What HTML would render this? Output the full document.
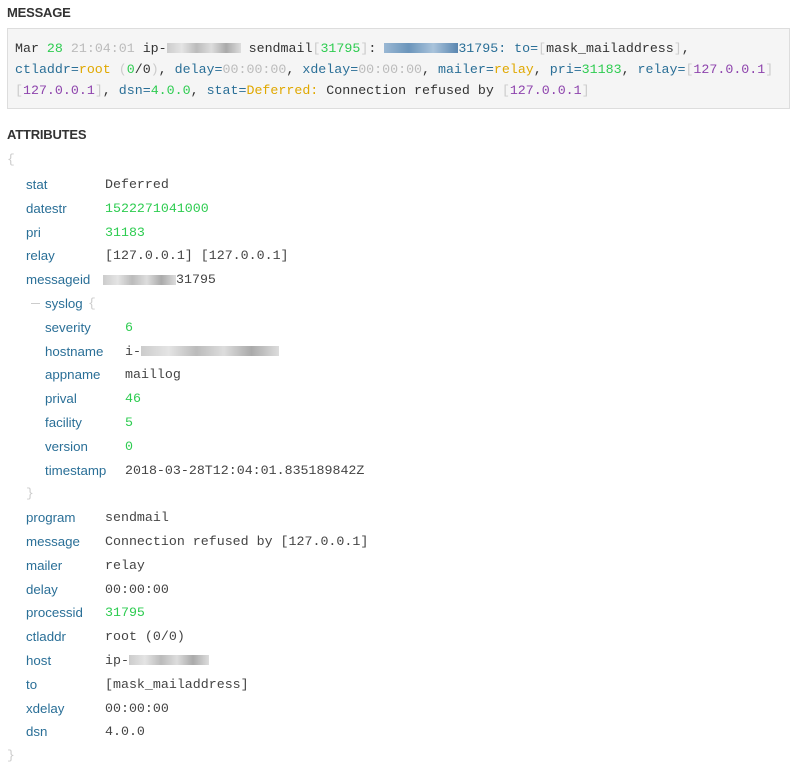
<!DOCTYPE html>
<html><head><meta charset="utf-8"><style>
body{margin:0;background:#fff;width:800px;height:767px;overflow:hidden;position:relative;font-family:"Liberation Sans",sans-serif}
h3{position:absolute;left:7px;margin:0;font-size:13px;font-weight:bold;color:#333;letter-spacing:-0.2px}
.box{position:absolute;left:7px;top:28px;width:783px;height:81px;background:#f5f5f5;border:1px solid #ddd;box-sizing:border-box}
.m{position:absolute;left:15px;font-family:"Liberation Mono",monospace;font-size:13.3px;color:#333;white-space:pre;line-height:21px}
.k{color:#2a6f97}.g{color:#2ecc51}.y{color:#e0a800}.p{color:#8e44ad}.l{color:#bbb}.b{color:#ccc}
.blur{display:inline-block;height:10px;background:linear-gradient(90deg,#ccc,#e4e4e4,#bbb,#ddd,#aaa,#ddd);vertical-align:middle}
.blu{display:inline-block;height:10px;background:linear-gradient(90deg,#9ab8d4,#6b95bb,#a9c3db,#5a86b0);vertical-align:middle}
.rows{position:absolute;left:0;top:173px;width:800px}
.r{height:23.8px;line-height:23.8px;position:relative;font-size:13.3px;white-space:pre}
.r .kk{position:absolute;color:#2a6f97;font-family:"Liberation Sans",sans-serif}
.r .v{position:absolute;font-family:"Liberation Mono",monospace;color:#444}
.r .v.g{color:#2ecc51}
.br{position:absolute;color:#ccc;font-family:"Liberation Mono",monospace;font-size:13px}
</style></head><body>
<h3 style="top:5px">MESSAGE</h3>
<div class="box"></div>
<div class="m" style="top:38px">Mar <span class="g">28</span> <span class="l">21:04:01</span> ip-<span class="blur" style="width:74px"></span> sendmail<span class="b">[</span><span class="g">31795</span><span class="b">]</span>: <span class="blu" style="width:74px"></span><span class="k">31795: to=</span><span class="b">[</span>mask_mailaddress<span class="b">]</span>,</div>
<div class="m" style="top:59px"><span class="k">ctladdr=</span><span class="y">root</span> <span class="b">(</span><span class="g">0</span>/0<span class="b">)</span>, <span class="k">delay=</span><span class="l">00:00:00</span>, <span class="k">xdelay=</span><span class="l">00:00:00</span>, <span class="k">mailer=</span><span class="y">relay</span>, <span class="k">pri=</span><span class="g">31183</span>, <span class="k">relay=</span><span class="b">[</span><span class="p">127.0.0.1</span><span class="b">]</span></div>
<div class="m" style="top:80px"><span class="b">[</span><span class="p">127.0.0.1</span><span class="b">]</span>, <span class="k">dsn=</span><span class="g">4.0.0</span>, <span class="k">stat=</span><span class="y">Deferred:</span> Connection refused by <span class="b">[</span><span class="p">127.0.0.1</span><span class="b">]</span></div>
<h3 style="top:127px">ATTRIBUTES</h3>
<div class="br" style="left:7px;top:152px">{</div>
<div class="rows">
<div class="r"><span class="kk" style="left:26px">stat</span><span class="v" style="left:105px">Deferred</span></div>
<div class="r"><span class="kk" style="left:26px">datestr</span><span class="v g" style="left:105px">1522271041000</span></div>
<div class="r"><span class="kk" style="left:26px">pri</span><span class="v g" style="left:105px">31183</span></div>
<div class="r"><span class="kk" style="left:26px">relay</span><span class="v" style="left:105px">[127.0.0.1] [127.0.0.1]</span></div>
<div class="r"><span class="kk" style="left:26px">messageid</span><span class="v" style="left:103px"><span class="blur" style="width:73px"></span>31795</span></div>
<div class="r"><span style="position:absolute;left:31px;top:11px;width:9px;height:1px;background:#ccc"></span><span class="kk" style="left:45px">syslog</span><span class="br" style="left:88px">{</span></div>
<div class="r"><span class="kk" style="left:45px">severity</span><span class="v g" style="left:125px">6</span></div>
<div class="r"><span class="kk" style="left:45px">hostname</span><span class="v" style="left:125px">i-<span class="blur" style="width:138px"></span></span></div>
<div class="r"><span class="kk" style="left:45px">appname</span><span class="v" style="left:125px">maillog</span></div>
<div class="r"><span class="kk" style="left:45px">prival</span><span class="v g" style="left:125px">46</span></div>
<div class="r"><span class="kk" style="left:45px">facility</span><span class="v g" style="left:125px">5</span></div>
<div class="r"><span class="kk" style="left:45px">version</span><span class="v g" style="left:125px">0</span></div>
<div class="r"><span class="kk" style="left:45px">timestamp</span><span class="v" style="left:125px">2018-03-28T12:04:01.835189842Z</span></div>
<div class="r"><span class="br" style="left:26px">}</span></div>
<div class="r"><span class="kk" style="left:26px">program</span><span class="v" style="left:105px">sendmail</span></div>
<div class="r"><span class="kk" style="left:26px">message</span><span class="v" style="left:105px">Connection refused by [127.0.0.1]</span></div>
<div class="r"><span class="kk" style="left:26px">mailer</span><span class="v" style="left:105px">relay</span></div>
<div class="r"><span class="kk" style="left:26px">delay</span><span class="v" style="left:105px">00:00:00</span></div>
<div class="r"><span class="kk" style="left:26px">processid</span><span class="v g" style="left:105px">31795</span></div>
<div class="r"><span class="kk" style="left:26px">ctladdr</span><span class="v" style="left:105px">root (0/0)</span></div>
<div class="r"><span class="kk" style="left:26px">host</span><span class="v" style="left:105px">ip-<span class="blur" style="width:80px"></span></span></div>
<div class="r"><span class="kk" style="left:26px">to</span><span class="v" style="left:105px">[mask_mailaddress]</span></div>
<div class="r"><span class="kk" style="left:26px">xdelay</span><span class="v" style="left:105px">00:00:00</span></div>
<div class="r"><span class="kk" style="left:26px">dsn</span><span class="v" style="left:105px">4.0.0</span></div>
<div class="r"><span class="br" style="left:7px">}</span></div>
</div>
</body></html>
